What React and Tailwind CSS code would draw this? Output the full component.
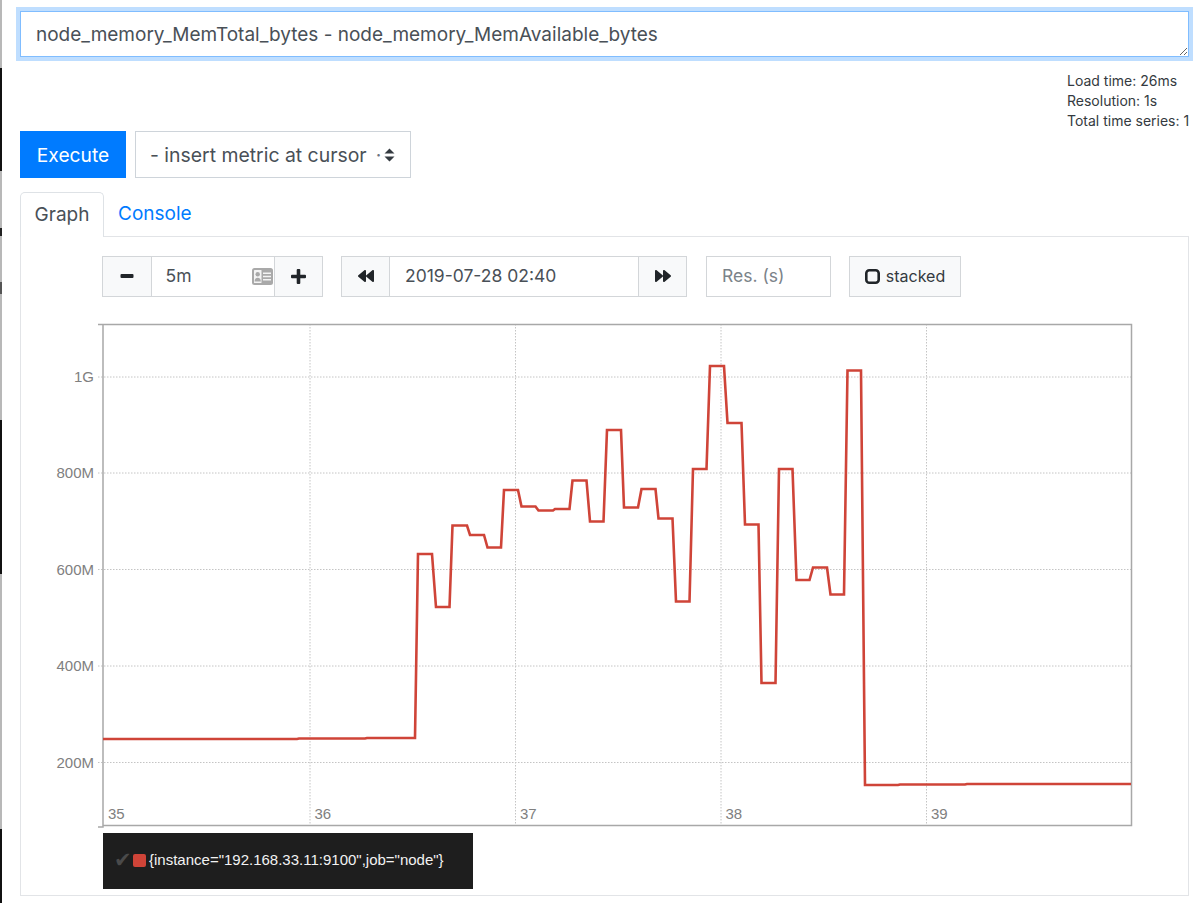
import React from "react";
import { FaBackward, FaForward } from "react-icons/fa";

const pts = [[103,739],[297,739],[299,738.5],[365,738.5],[367,738],[415,738],[418,554],[432,554],[436,607],[449.5,607],[452.5,525.5],[467,525.5],[470,535],[484,535],[487.5,547.5],[501,547.5],[504,490],[518,490],[521.5,506.5],[535.5,506.5],[538.5,510.5],[553,510.5],[555,509],[569.5,509],[572.5,480.5],[586.5,480.5],[590,521.5],[603.5,521.5],[607,430],[621,430],[624,507.5],[638,507.5],[641.5,489],[655.5,489],[658.5,518.5],[672.5,518.5],[676,601.5],[689.5,601.5],[693,469],[706.5,469],[710,366],[724,366],[727.5,423],[741.5,423],[745,524.5],[758.5,524.5],[761.5,683],[775.5,683],[779,469],[792.5,469],[796.5,580],[809.5,580],[813,567.5],[827,567.5],[830.5,594.5],[844,594.5],[847.5,370.5],[861,370.5],[865,785],[898,785],[900,784.5],[965,784.5],[967,784],[1131,784]];
const ys = [[377,"1G"],[473,"800M"],[569.5,"600M"],[666,"400M"],[762.5,"200M"]];
const xs = [[310,"36"],[515.5,"37"],[721,"38"],[926.5,"39"]];
const sans = "font-['Inter','Liberation_Sans',sans-serif]";

function Chart() {
  return (
    <svg className="block w-[1167px] h-[536px]" viewBox="21 297 1167 536" fill="none">
      {ys.map(([y]) => <line key={y} x1="98" x2="1131" y1={y} y2={y} stroke="#c4c4c4" strokeDasharray="1.5 1.5" />)}
      {xs.map(([x]) => <line key={x} x1={x} x2={x} y1="324" y2="826" stroke="#c4c4c4" strokeDasharray="1.5 1.5" />)}
      <path d="M98 324.5H1131.5V825.5H103M103 324V827H98" stroke="#a8a8a8" strokeWidth="1.5" />
      <polyline points={pts.map((p) => p.join(",")).join(" ")} stroke="#cf4438" strokeWidth="2.6" strokeLinejoin="miter" />
      <g fill="#808080" fontFamily="'Liberation Sans',sans-serif" fontSize="15">
        {ys.map(([y, t]) => <text key={t} x="94" y={y + 5} textAnchor="end">{t}</text>)}
        <text x="108" y="818.5">35</text>
        {xs.map(([x, t]) => <text key={t} x={x + 4.5} y="818.5">{t}</text>)}
      </g>
    </svg>
  );
}

const MinusIcon = () => (
  <svg width="14" height="14" viewBox="0 0 14 14" fill="#212529"><rect x="0.5" y="5" width="13" height="4" rx="1" /></svg>
);
const PlusIcon = () => (
  <svg width="15" height="15" viewBox="0 0 15 15" fill="#212529"><path d="M5.7 1a1 1 0 0 1 1-1h1.6a1 1 0 0 1 1 1v4.7H14a1 1 0 0 1 1 1v1.6a1 1 0 0 1-1 1H9.3V14a1 1 0 0 1-1 1H6.7a1 1 0 0 1-1-1V9.3H1a1 1 0 0 1-1-1V6.7a1 1 0 0 1 1-1h4.7Z" /></svg>
);
const CardIcon = () => (
  <svg width="21" height="17" viewBox="0 0 21 17" fill="none">
    <rect width="21" height="17" rx="2.5" fill="#a9a9a9" />
    <rect x="2" y="2" width="7.5" height="13" rx="0.5" fill="#f4f4f4" />
    <circle cx="5.7" cy="6.2" r="2.2" fill="#a9a9a9" />
    <path d="M2.6 13.5c0-2.600 1.100-3.700 3.100-3.700s3.100 1.100 3.100 3.700Z" fill="#a9a9a9" />
    <path d="M11 5.200h8M11 8.500h8M11 11.800h8" stroke="#f4f4f4" strokeWidth="1.500" />
  </svg>
);

export default function App() {
  return (
    <div className={`relative w-[1200px] h-[903px] overflow-hidden bg-white pl-[20px] pr-[11px] pt-[11px] text-[#495057] ${sans}`}>
      <div className="absolute left-0 top-0 flex h-[903px] w-[1.5px] flex-col bg-[#b8b8b8]">
        <div className="mt-[68px] h-[103px] bg-[#111111]" />
        <div className="mt-[57px] h-[8px] bg-[#222222]" />
        <div className="mt-[46px] h-[12px] bg-[#555555]" />
        <div className="mt-[126px] h-[154px] bg-[#111111]" />
        <div className="mt-[255px] h-[74px] bg-[#111111]" />
      </div>
      <textarea
        readOnly
        defaultValue="node_memory_MemTotal_bytes - node_memory_MemAvailable_bytes"
        className="block w-full h-[46px] resize-y rounded-none border border-[#80bdff] bg-white pl-[15px] pr-[16px] pt-[9px] pb-[5px] text-[19px] leading-[28px] text-[#495057] outline-none ring-4 ring-[#007bff]/25"
      />
      <div className="flex justify-end h-[74px] pt-[14px]">
        <div className="w-[122px] text-[14px] leading-[20px] text-[#343a40] whitespace-nowrap">
          <div>Load time: 26ms</div>
          <div>Resolution: 1s</div>
          <div>Total time series: 1</div>
        </div>
      </div>
      <div className="flex gap-[9px] h-[47px]">
        <div className="flex w-[106px] items-center justify-center bg-[#007bff] pt-px text-[19.2px] text-white">Execute</div>
        <div className="flex w-[276px] items-center border border-[#ced4da] pl-[14px] pt-[2px] text-[19.4px] text-[#495057] whitespace-nowrap">
          <span>- insert metric at cursor</span>
          <span className="ml-[9px] text-[#6c757d]">·</span>
          <svg width="11" height="14" viewBox="0 0 11 14" fill="#343a40" className="ml-[3px] mb-[2px] shrink-0"><path d="M5.5 0.5 10.5 5.500H0.500ZM5.5 13.500 0.500 8.500H10.500Z" /></svg>
        </div>
      </div>
      <div className="mt-[14px] flex h-[45px]">
        <div className="w-[84px] h-[45px] rounded-t-[5px] border border-b-0 border-[#dee2e6] bg-white z-10 flex items-center justify-center text-[19px] text-[#495057]">Graph</div>
        <div className="px-[14px] flex items-center text-[19px] text-[#007bff]">Console</div>
      </div>
      <div className="-mt-px border-[1.5px] border-[#e2e4e7] h-[660px] pt-[18.5px]">
        <div className="flex h-[41px] ml-[81px] text-[17.5px] text-[#495057]">
          <div className="flex h-full w-[221px] border-[1.5px] border-[#d3d6d9]">
            <div className="flex w-[47.5px] items-center justify-center bg-[#f8f9fa]"><MinusIcon /></div>
            <div className="flex flex-1 items-center justify-between border-x-[1.5px] border-[#d3d6d9] pl-[14px] pr-[1px]">
              <span>5m</span>
              <CardIcon />
            </div>
            <div className="flex w-[47px] items-center justify-center bg-[#f8f9fa]"><PlusIcon /></div>
          </div>
          <div className="ml-[18px] flex h-full w-[346px] border-[1.5px] border-[#d3d6d9]">
            <div className="flex w-[47px] items-center justify-center bg-[#f8f9fa] text-[#212529]"><FaBackward size={16} /></div>
            <div className="flex flex-1 items-center border-x-[1.5px] border-[#d3d6d9] pl-[15px]">2019-07-28 02:40</div>
            <div className="flex w-[47px] items-center justify-center bg-[#f8f9fa] text-[#212529]"><FaForward size={16} /></div>
          </div>
          <div className="ml-[19px] flex h-full w-[125px] items-center border-[1.5px] border-[#d3d6d9] pl-[15px] text-[#7b8389]">Res. (s)</div>
          <div className="ml-[18px] flex h-full w-[112px] items-center justify-center gap-[6px] border-[1.5px] border-[#d3d6d9] bg-[#f8f9fa] text-[16px] text-[#343a40]">
            <svg width="15" height="15" viewBox="0 0 15 15" fill="none"><rect x="1.3" y="1.3" width="12.4" height="12.4" rx="3" stroke="#212529" strokeWidth="2.6" /></svg>
            <span>stacked</span>
          </div>
        </div>
        <Chart />
        <div className="ml-[82px] flex h-[56px] w-[370px] items-center bg-[#1e1e1e] pl-[11px] font-['Liberation_Sans',sans-serif] text-[15px] text-[#f2f2f2] whitespace-nowrap">
          <span className="w-[19px] font-['DejaVu_Sans',sans-serif] text-[21px] leading-none text-[#4a4a4a]">✔</span>
          <span className="h-[13px] w-[13px] rounded-[2px] bg-[#cf4438] mr-[3px]" />
          <span>{'{instance="192.168.33.11:9100",job="node"}'}</span>
        </div>
      </div>
    </div>
  );
}
